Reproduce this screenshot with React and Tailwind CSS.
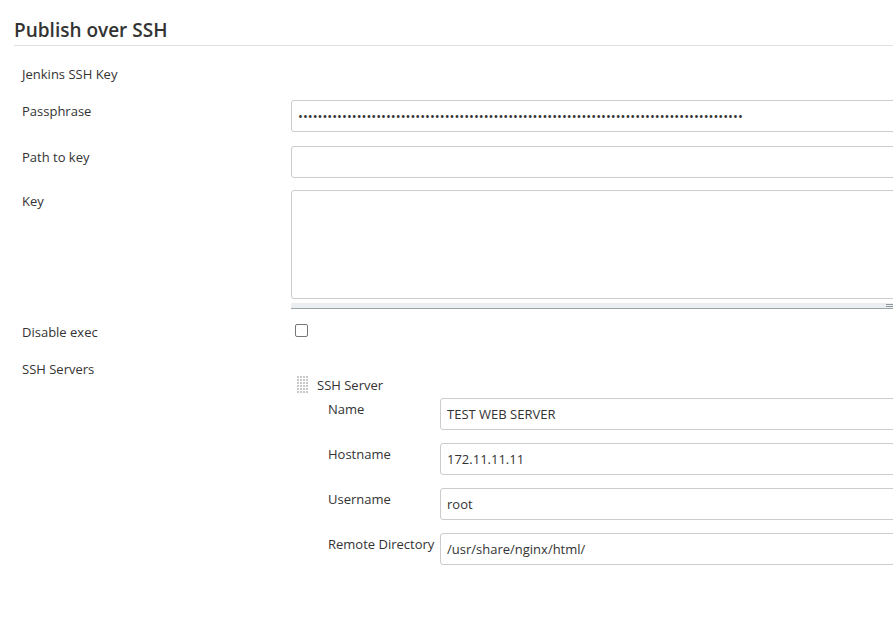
import React from 'react';

const font = { fontFamily: '"Open Sans", "Noto Sans", sans-serif' };

function TextField({ value = '', type = 'text' }) {
  return (
    <input
      type={type}
      readOnly
      value={value}
      className="h-[32px] w-[700px] rounded-[3px] border border-[#cccccc] bg-white px-[6px] text-[13px] text-[#333] outline-none"
    />
  );
}

function Row({ label, children, className = '', labelClass = 'pt-[1px]' }) {
  return (
    <div className={`flex items-start ${className}`}>
      <div className={`w-[269px] shrink-0 text-[13px] leading-[20px] text-[#333] ${labelClass}`}>{label}</div>
      <div className="min-w-0">{children}</div>
    </div>
  );
}

function SubRow({ label, value, className = '' }) {
  return (
    <div className={`flex items-start ${className}`}>
      <div className="w-[112px] shrink-0 pt-[1px] text-[13px] leading-[20px] text-[#333]">{label}</div>
      <TextField value={value} />
    </div>
  );
}

function DragHandle() {
  const dots = [];
  for (let r = 0; r < 6; r++) {
    for (let c = 0; c < 4; c++) {
      dots.push(<rect key={`${r}-${c}`} x={c * 3} y={r * 3} width="2" height="2" fill="#c8c8c8" />);
    }
  }
  return (
    <svg width="12" height="18" viewBox="0 0 12 18" className="shrink-0">
      {dots}
    </svg>
  );
}

export default function App() {
  return (
    <div className="w-full overflow-hidden bg-white" style={font}>
      <div className="w-[1100px] pb-[50px]">
        <div className="ml-[14px] border-b border-[#e0e0e0] pt-[19px] pb-[4px]">
          <h2 className="text-[19px] font-semibold leading-[22px] text-[#333]">Publish over SSH</h2>
        </div>

        <div className="pl-[22px]">
          <div className="mt-[18px] text-[13px] leading-[20px] text-[#333]">Jenkins SSH Key</div>

          <Row label="Passphrase" className="mt-[16px]">
            <TextField type="password" value={'x'.repeat(91)} />
          </Row>

          <Row label="Path to key" className="mt-[14px]">
            <TextField />
          </Row>

          <Row label="Key" className="mt-[12px]">
            <div>
              <textarea
                readOnly
                className="block h-[109px] w-[700px] resize-none rounded-[3px] border border-[#cccccc] bg-white outline-none"
              />
              <div className="mt-[4px] flex h-[6px] w-[602px] items-center justify-end border-b border-[#9aa5aa] bg-[#eceff1]">
                <div className="flex flex-col gap-[1px]">
                  <div className="h-[1px] w-[7px] bg-[#8f979b]" />
                  <div className="h-[1px] w-[7px] bg-[#8f979b]" />
                </div>
              </div>
            </div>
          </Row>

          <Row label="Disable exec" className="mt-[13px]" labelClass="pt-0">
            <div className="pl-[4px] pt-[2px]">
              <div className="h-[13px] w-[13px] rounded-[2px] border border-[#767676] bg-white" />
            </div>
          </Row>

          <Row label="SSH Servers" className="mt-[17px]" labelClass="pt-0">
            <div className="pt-[16px]">
              <div className="flex items-center gap-[8px] pl-[6px]">
                <DragHandle />
                <span className="text-[13px] leading-[20px] text-[#333]">SSH Server</span>
              </div>
              <div className="pl-[37px]">
                <SubRow label="Name" value="TEST WEB SERVER" className="mt-[3px]" />
                <SubRow label="Hostname" value="172.11.11.11" className="mt-[13px]" />
                <SubRow label="Username" value="root" className="mt-[13px]" />
                <SubRow label="Remote Directory" value="/usr/share/nginx/html/" className="mt-[13px]" />
              </div>
            </div>
          </Row>
        </div>
      </div>
    </div>
  );
}
